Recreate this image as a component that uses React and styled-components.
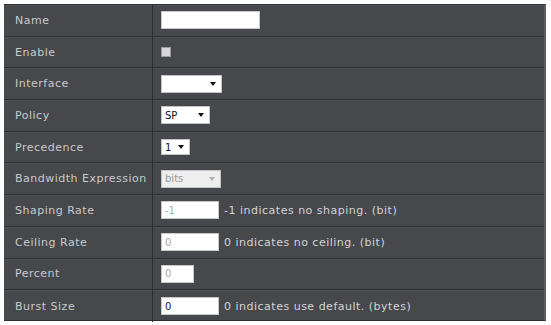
import React from "react";
import styled, { createGlobalStyle } from "styled-components";

const Global = createGlobalStyle`
  html, body { margin: 0; padding: 0; background: #ffffff; }
  body { width: 551px; height: 325px; overflow: hidden; }
`;

const Page = styled.div`
  padding: 4px 5px 4px 4px;
  font-family: "DejaVu Sans", Verdana, sans-serif;
`;

const Table = styled.div`
  display: grid;
  grid-template-columns: 149px 1fr;
  grid-auto-rows: 31.7px;
  background: #46484c;
  border-top: 1px solid #2e3033;
  border-right: 2px solid #5c5f63;
  border-bottom: 1px solid #2a2c2f;
  height: 317px;
  box-sizing: border-box;
`;

const Label = styled.div`
  display: flex;
  align-items: center;
  padding-left: 11px;
  color: #c9cacc;
  font-size: 11px;
  letter-spacing: 0.5px;
  border-right: 1px solid #2b2d30;
  border-bottom: ${(p) => (p.$last ? "none" : "1px solid #2c2e31")};
  box-shadow: inset 0 1px 0 #505256;
  white-space: nowrap;
`;

const Value = styled.div`
  display: flex;
  align-items: center;
  gap: 5px;
  padding-left: 8px;
  border-bottom: ${(p) => (p.$last ? "none" : "1px solid #2c2e31")};
  box-shadow: inset 0 1px 0 #505256;
  color: #d4d4d6;
  font-size: 11px;
  letter-spacing: 0.5px;
`;

const TextBox = styled.div`
  width: ${(p) => p.$w}px;
  height: 18px;
  box-sizing: border-box;
  background: #ffffff;
  border: 1px solid #c9c9c9;
  display: flex;
  align-items: center;
  padding-left: 3px;
  font-size: 10px;
  letter-spacing: 0;
  color: ${(p) => (p.$dim ? "#a8a8a8" : "#222")};
`;

const Check = styled.div`
  width: 10px;
  height: 10px;
  background: #d6d6d8;
  border: 1px solid #9a9a9c;
  box-sizing: border-box;
`;

const Select = styled.div`
  width: ${(p) => p.$w}px;
  height: ${(p) => p.$h || 18}px;
  box-sizing: border-box;
  background: ${(p) => (p.$disabled ? "#eeeeee" : "#ffffff")};
  border: 1px solid #c4c4c4;
  display: flex;
  align-items: center;
  justify-content: space-between;
  padding: 0 5px 0 3px;
  font-size: 10px;
  letter-spacing: 0;
  color: ${(p) => (p.$disabled ? "#9a9a9a" : "#111")};
`;

const Arrow = styled.span`
  width: 0;
  height: 0;
  border-left: 3px solid transparent;
  border-right: 3px solid transparent;
  border-top: 4px solid ${(p) => (p.$disabled ? "#b0b0b0" : "#111")};
`;

const Hint = styled.span`
  white-space: nowrap;
`;

const rows = [
  ["Name", <TextBox $w={99} />],
  ["Enable", <Check />],
  ["Interface", <Select $w={61}><span /><Arrow /></Select>],
  ["Policy", <Select $w={49}><span>SP</span><Arrow /></Select>],
  ["Precedence", <Select $w={29} $h={16}><span>1</span><Arrow /></Select>],
  ["Bandwidth Expression", <Select $w={60} $disabled><span>bits</span><Arrow $disabled /></Select>],
  ["Shaping Rate", <><TextBox $w={58} $dim>-1</TextBox><Hint>-1 indicates no shaping. (bit)</Hint></>],
  ["Ceiling Rate", <><TextBox $w={58} $dim>0</TextBox><Hint>0 indicates no ceiling. (bit)</Hint></>],
  ["Percent", <TextBox $w={33} $dim>0</TextBox>],
  ["Burst Size", <><TextBox $w={58}>0</TextBox><Hint>0 indicates use default. (bytes)</Hint></>],
];

export default function App() {
  return (
    <Page>
      <Global />
      <Table>
        {rows.map(([label, content], i) => (
          <React.Fragment key={label}>
            <Label $last={i === rows.length - 1}>{label}</Label>
            <Value $last={i === rows.length - 1}>{content}</Value>
          </React.Fragment>
        ))}
      </Table>
    </Page>
  );
}
